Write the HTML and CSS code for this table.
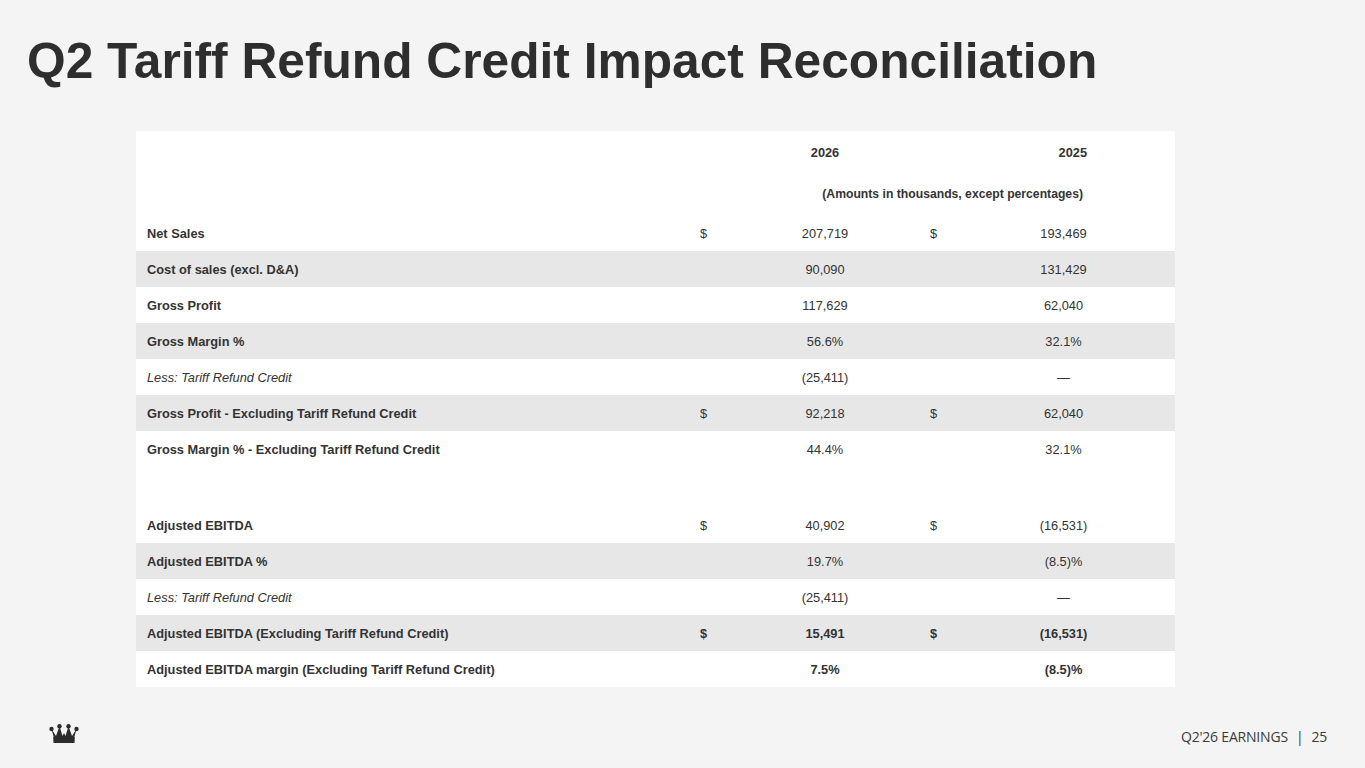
FILE: index.html
```html
<!DOCTYPE html>
<html lang="en">
<head>
<meta charset="utf-8">
<title>Q2 Tariff Refund Credit Impact Reconciliation</title>
<link rel="stylesheet" href="styles.css">
</head>
<body>
<div class="slide">
  <h1 class="title">Q2 Tariff Refund Credit Impact Reconciliation</h1>
  <div class="table-wrap">
    <table class="recon">
      <colgroup>
        <col class="c-label"><col class="c-cur"><col class="c-val"><col class="c-cur"><col class="c-val2">
      </colgroup>
      <tbody>
        <tr class="head">
          <td></td><td></td><td class="yr">2026</td><td></td><td class="yr2">2025</td>
        </tr>
        <tr class="head">
          <td></td><td></td><td colspan="3" class="amounts">(Amounts in thousands, except percentages)</td>
        </tr>
        <tr><td class="label">Net Sales</td><td class="cur">$</td><td class="num">207,719</td><td class="cur">$</td><td class="num">193,469</td></tr>
        <tr class="band"><td class="label">Cost of sales (excl. D&amp;A)</td><td></td><td class="num">90,090</td><td></td><td class="num">131,429</td></tr>
        <tr><td class="label">Gross Profit</td><td></td><td class="num">117,629</td><td></td><td class="num">62,040</td></tr>
        <tr class="band"><td class="label">Gross Margin %</td><td></td><td class="num">56.6%</td><td></td><td class="num">32.1%</td></tr>
        <tr><td class="label less">Less: Tariff Refund Credit</td><td></td><td class="num">(25,411)</td><td></td><td class="num">—</td></tr>
        <tr class="band"><td class="label">Gross Profit - Excluding Tariff Refund Credit</td><td class="cur">$</td><td class="num">92,218</td><td class="cur">$</td><td class="num">62,040</td></tr>
        <tr><td class="label">Gross Margin % - Excluding Tariff Refund Credit</td><td></td><td class="num">44.4%</td><td></td><td class="num">32.1%</td></tr>
        <tr class="spacer"><td colspan="5"></td></tr>
        <tr><td class="label">Adjusted EBITDA</td><td class="cur">$</td><td class="num">40,902</td><td class="cur">$</td><td class="num">(16,531)</td></tr>
        <tr class="band"><td class="label">Adjusted EBITDA %</td><td></td><td class="num">19.7%</td><td></td><td class="num">(8.5)%</td></tr>
        <tr><td class="label less">Less: Tariff Refund Credit</td><td></td><td class="num">(25,411)</td><td></td><td class="num">—</td></tr>
        <tr class="band strong"><td class="label">Adjusted EBITDA (Excluding Tariff Refund Credit)</td><td class="cur">$</td><td class="num">15,491</td><td class="cur">$</td><td class="num">(16,531)</td></tr>
        <tr class="strong"><td class="label">Adjusted EBITDA margin (Excluding Tariff Refund Credit)</td><td></td><td class="num">7.5%</td><td></td><td class="num">(8.5)%</td></tr>
      </tbody>
    </table>
  </div>
  <footer class="footer">
    <svg class="crown" width="30" height="20" viewBox="0 0 30 20" aria-hidden="true">
      <circle cx="2.5" cy="5" r="2.2" fill="#2b2b2b"/>
      <circle cx="10.5" cy="2.2" r="2.2" fill="#2b2b2b"/>
      <circle cx="19.5" cy="2.2" r="2.2" fill="#2b2b2b"/>
      <circle cx="27.5" cy="5" r="2.2" fill="#2b2b2b"/>
      <path d="M2.5 5 L7 12 L10.5 2.2 L13.5 12 L15 9 L16.5 12 L19.5 2.2 L23 12 L27.5 5 L25 14 L5 14 Z" fill="#2b2b2b"/>
      <path d="M4.2 13 Q15 11 25.8 13 L25.5 19 L4.5 19 Z" fill="#2b2b2b"/>
    </svg>
    <div class="page-label">Q2'26 EARNINGS<span class="sep">|</span>25</div>
  </footer>
</div>
</body>
</html>
```

FILE: styles.css
```css
html, body {
  margin: 0;
  padding: 0;
  background: #f4f4f4;
}
.slide {
  width: 1365px;
  height: 768px;
  display: flex;
  flex-direction: column;
  font-family: "Liberation Sans", Arial, sans-serif;
  color: #333333;
}
.title {
  margin: 36px 0 0 27px;
  font-size: 49.7px;
  line-height: 50px;
  font-weight: 700;
  color: #2e2e2e;
  letter-spacing: 0;
}
.table-wrap {
  margin: 45px 0 0 136px;
  width: 1039px;
}
.recon {
  width: 1039px;
  table-layout: fixed;
  border-collapse: collapse;
  background: #ffffff;
  font-size: 12.8px;
}
.c-label { width: 554px; }
.c-cur { width: 40px; }
.c-val { width: 190px; }
.c-val2 { width: 215px; }
.recon td {
  height: 36px;
  padding: 0;
  vertical-align: middle;
  white-space: nowrap;
}
.recon tr.head td {
  height: 42px;
  font-weight: 700;
}
.recon tr.band td {
  background: #e7e7e7;
}
.recon tr.spacer td {
  height: 40px;
}
.recon td.label {
  padding-left: 11px;
  font-weight: 700;
}
.recon td.label.less {
  font-weight: 400;
  font-style: italic;
}
.recon td.cur {
  padding-left: 10px;
}
.recon td.num {
  text-align: center;
}
.recon td.num:last-child {
  padding-right: 8px;
}
.recon tr.head td.yr {
  text-align: center;
}
.recon tr.head td.yr2 {
  text-align: right;
  padding-right: 88px;
}
.recon tr.head td.amounts {
  text-align: right;
  padding-right: 92px;
  font-size: 12.2px;
}
.recon tr.strong td {
  font-weight: 700;
}
.footer {
  margin-top: auto;
  height: 82px;
  display: flex;
  align-items: flex-start;
  justify-content: space-between;
  padding: 0 38px 0 49px;
}
.crown {
  margin-top: 37px;
  display: block;
}
.page-label {
  margin-top: 42px;
  font-family: "Open Sans", "DejaVu Sans", sans-serif;
  font-size: 14px;
  line-height: 16px;
  color: #3a3a3a;
  letter-spacing: -0.2px;
}
.sep {
  margin: 0 8px;
}
```
